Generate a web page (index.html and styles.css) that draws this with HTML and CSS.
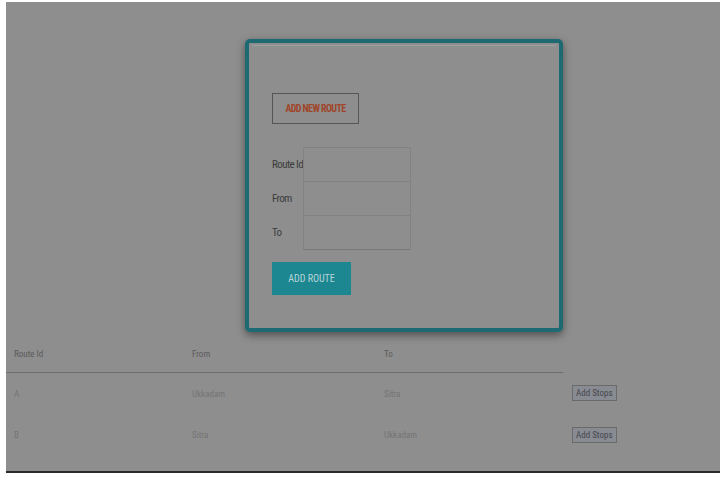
FILE: index.html
```html
<!DOCTYPE html>
<html>
<head>
<meta charset="utf-8">
<link rel="stylesheet" href="styles.css">
</head>
<body>
<div class="page">
  <table class="routes">
    <thead>
      <tr><th>Route Id</th><th>From</th><th>To</th><th class="empty"></th></tr>
    </thead>
    <tbody>
      <tr><td>A</td><td>Ukkadam</td><td>Sitra</td><td><button class="stops">Add Stops</button></td></tr>
      <tr><td>B</td><td>Sitra</td><td>Ukkadam</td><td><button class="stops">Add Stops</button></td></tr>
    </tbody>
  </table>
  <div class="modal">
    <div class="modal-head"></div>
    <div class="modal-body">
      <div class="new-route">ADD NEW ROUTE</div>
      <div class="form">
        <div class="field"><span class="lbl">Route Id</span><span class="box"></span></div>
        <div class="field"><span class="lbl">From</span><span class="box"></span></div>
        <div class="field"><span class="lbl">To</span><span class="box"></span></div>
      </div>
      <div class="add-route">ADD ROUTE</div>
    </div>
  </div>
</div>
</body>
</html>
```
FILE: styles.css
```css
html, body {
  margin: 0;
  padding: 0;
  background: #ffffff;
}
body {
  font-family: "Roboto Condensed", "Liberation Sans Narrow", "DejaVu Sans Condensed", Roboto, sans-serif;
}
.page {
  position: relative;
  margin: 2px 0 0 6px;
  height: 471px;
  background: #8e8e8e;
  border-bottom: 2px solid #2a2a2a;
  padding-top: 333px;
  box-sizing: border-box;
}
.routes {
  border-collapse: collapse;
  font-size: 9px;
}
.routes th {
  text-align: left;
  font-weight: normal;
  color: #5a5a5a;
  height: 37px;
  padding: 0 8px;
  border-bottom: 1px solid #6d6d6d;
}
.routes th:nth-child(1), .routes td:nth-child(1) { width: 162px; }
.routes th:nth-child(2), .routes td:nth-child(2) { width: 176px; }
.routes th:nth-child(3), .routes td:nth-child(3) { width: 171px; }
.routes th.empty { border-bottom: none; }
.routes td {
  color: #747474;
  height: 41px;
  padding: 0 8px;
}
.stops {
  font-family: inherit;
  font-size: 9px;
  color: #45464e;
  background: #898b92;
  border: 1px solid #6a6a6a;
  padding: 2px 3px;
  margin-left: 1px;
}
.modal {
  position: absolute;
  left: 239px;
  top: 37px;
  width: 310px;
  height: 285px;
  border: 4px solid #1d6a72;
  border-radius: 5px;
  box-shadow: 0 3px 8px rgba(0,0,0,0.45);
  background: #8e8e8e;
}
.modal-head {
  height: 1px;
  margin: 2px 3px 0;
  background: #a0a0a0;
}
.modal-body {
  padding: 47px 0 0 23px;
}
.new-route {
  width: 87px;
  height: 31px;
  box-sizing: border-box;
  border: 1px solid #555555;
  color: #a0452a;
  font-size: 10px;
  font-weight: bold;
  display: flex;
  align-items: center;
  justify-content: center;
  letter-spacing: -0.6px;
}
.form {
  margin-top: 23px;
}
.field {
  display: flex;
  align-items: center;
  height: 34px;
}
.lbl {
  width: 31px;
  font-size: 11px;
  color: #3c3c3c;
  white-space: nowrap;
  letter-spacing: -0.6px;
}
.box {
  width: 106px;
  height: 33px;
  border: 1px solid #828282;
  border-bottom-color: #7a7a7a;
}
.add-route {
  margin-top: 13px;
  width: 79px;
  height: 33px;
  background: #1c8791;
  color: #b7d3d5;
  font-size: 10px;
  display: flex;
  align-items: center;
  justify-content: center;
}
```
